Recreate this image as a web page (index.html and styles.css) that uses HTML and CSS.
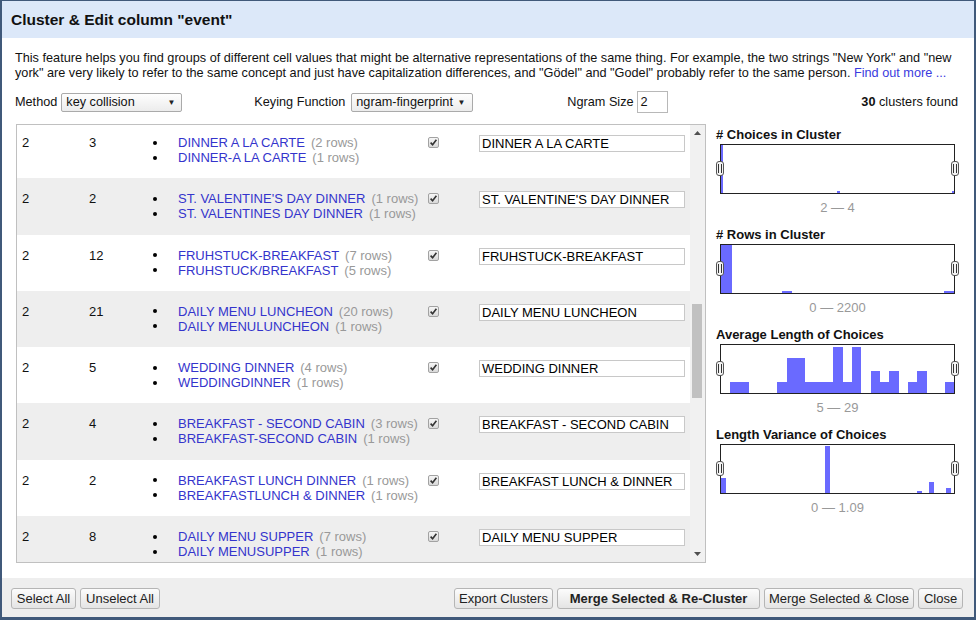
FILE: index.html
```html
<!DOCTYPE html>
<html>
<head>
<meta charset="utf-8">
<title>Cluster &amp; Edit</title>
<link rel="stylesheet" href="styles.css">
</head>
<body>
<div class="dialog">
  <div class="title">Cluster &amp; Edit column "event"</div>
  <div class="body">
    <p class="desc">This feature helps you find groups of different cell values that might be alternative representations of the same thing. For example, the two strings "New York" and "new york" are very likely to refer to the same concept and just have capitalization differences, and "Gödel" and "Godel" probably refer to the same person. <a href="#">Find out more ...</a></p>
    <div class="controls">
      <span>Method</span>
      <div class="select sel-method"><span>key collision</span><span class="arrow">▼</span></div>
      <span class="lbl-key">Keying Function</span>
      <div class="select sel-key"><span>ngram-fingerprint</span><span class="arrow">▼</span></div>
      <span class="lbl-ngram">Ngram Size</span>
      <div class="ngram">2</div>
      <span class="count"><b>30</b> clusters found</span>
    </div>
    <div class="main">
      <div class="table-box">
        <div class="rows-view">
          <div class="rows">
            <div class="row">
              <div class="c">2</div><div class="c">3</div>
              <ul class="vals"><li><span class="dot"></span><a>DINNER A LA CARTE</a><span class="n">(2 rows)</span></li><li><span class="dot"></span><a>DINNER-A LA CARTE</a><span class="n">(1 rows)</span></li></ul>
              <div class="c"><span class="cb"><svg width="9" height="9" viewBox="0 0 9 9"><path d="M1.6 4.6 L3.6 6.8 L7.4 1.8" fill="none" stroke="#333" stroke-width="1.6"/></svg></span></div>
              <div class="c"><div class="inp">DINNER A LA CARTE</div></div>
            </div>
            <div class="row alt">
              <div class="c">2</div><div class="c">2</div>
              <ul class="vals"><li><span class="dot"></span><a>ST. VALENTINE'S DAY DINNER</a><span class="n">(1 rows)</span></li><li><span class="dot"></span><a>ST. VALENTINES DAY DINNER</a><span class="n">(1 rows)</span></li></ul>
              <div class="c"><span class="cb"><svg width="9" height="9" viewBox="0 0 9 9"><path d="M1.6 4.6 L3.6 6.8 L7.4 1.8" fill="none" stroke="#333" stroke-width="1.6"/></svg></span></div>
              <div class="c"><div class="inp">ST. VALENTINE'S DAY DINNER</div></div>
            </div>
            <div class="row">
              <div class="c">2</div><div class="c">12</div>
              <ul class="vals"><li><span class="dot"></span><a>FRUHSTUCK-BREAKFAST</a><span class="n">(7 rows)</span></li><li><span class="dot"></span><a>FRUHSTUCK/BREAKFAST</a><span class="n">(5 rows)</span></li></ul>
              <div class="c"><span class="cb"><svg width="9" height="9" viewBox="0 0 9 9"><path d="M1.6 4.6 L3.6 6.8 L7.4 1.8" fill="none" stroke="#333" stroke-width="1.6"/></svg></span></div>
              <div class="c"><div class="inp">FRUHSTUCK-BREAKFAST</div></div>
            </div>
            <div class="row alt">
              <div class="c">2</div><div class="c">21</div>
              <ul class="vals"><li><span class="dot"></span><a>DAILY MENU LUNCHEON</a><span class="n">(20 rows)</span></li><li><span class="dot"></span><a>DAILY MENULUNCHEON</a><span class="n">(1 rows)</span></li></ul>
              <div class="c"><span class="cb"><svg width="9" height="9" viewBox="0 0 9 9"><path d="M1.6 4.6 L3.6 6.8 L7.4 1.8" fill="none" stroke="#333" stroke-width="1.6"/></svg></span></div>
              <div class="c"><div class="inp">DAILY MENU LUNCHEON</div></div>
            </div>
            <div class="row">
              <div class="c">2</div><div class="c">5</div>
              <ul class="vals"><li><span class="dot"></span><a>WEDDING DINNER</a><span class="n">(4 rows)</span></li><li><span class="dot"></span><a>WEDDINGDINNER</a><span class="n">(1 rows)</span></li></ul>
              <div class="c"><span class="cb"><svg width="9" height="9" viewBox="0 0 9 9"><path d="M1.6 4.6 L3.6 6.8 L7.4 1.8" fill="none" stroke="#333" stroke-width="1.6"/></svg></span></div>
              <div class="c"><div class="inp">WEDDING DINNER</div></div>
            </div>
            <div class="row alt">
              <div class="c">2</div><div class="c">4</div>
              <ul class="vals"><li><span class="dot"></span><a>BREAKFAST - SECOND CABIN</a><span class="n">(3 rows)</span></li><li><span class="dot"></span><a>BREAKFAST-SECOND CABIN</a><span class="n">(1 rows)</span></li></ul>
              <div class="c"><span class="cb"><svg width="9" height="9" viewBox="0 0 9 9"><path d="M1.6 4.6 L3.6 6.8 L7.4 1.8" fill="none" stroke="#333" stroke-width="1.6"/></svg></span></div>
              <div class="c"><div class="inp">BREAKFAST - SECOND CABIN</div></div>
            </div>
            <div class="row">
              <div class="c">2</div><div class="c">2</div>
              <ul class="vals"><li><span class="dot"></span><a>BREAKFAST LUNCH DINNER</a><span class="n">(1 rows)</span></li><li><span class="dot"></span><a>BREAKFASTLUNCH &amp; DINNER</a><span class="n">(1 rows)</span></li></ul>
              <div class="c"><span class="cb"><svg width="9" height="9" viewBox="0 0 9 9"><path d="M1.6 4.6 L3.6 6.8 L7.4 1.8" fill="none" stroke="#333" stroke-width="1.6"/></svg></span></div>
              <div class="c"><div class="inp">BREAKFAST LUNCH &amp; DINNER</div></div>
            </div>
            <div class="row alt">
              <div class="c">2</div><div class="c">8</div>
              <ul class="vals"><li><span class="dot"></span><a>DAILY MENU SUPPER</a><span class="n">(7 rows)</span></li><li><span class="dot"></span><a>DAILY MENUSUPPER</a><span class="n">(1 rows)</span></li></ul>
              <div class="c"><span class="cb"><svg width="9" height="9" viewBox="0 0 9 9"><path d="M1.6 4.6 L3.6 6.8 L7.4 1.8" fill="none" stroke="#333" stroke-width="1.6"/></svg></span></div>
              <div class="c"><div class="inp">DAILY MENU SUPPER</div></div>
            </div>
          </div>
        </div>
        <div class="scrollbar">
          <div class="sb-btn"><svg width="7" height="4" viewBox="0 0 7 4"><path d="M0 4 L3.5 0 L7 4 Z" fill="#505050"/></svg></div>
          <div class="sb-track"><div class="sb-thumb"></div></div>
          <div class="sb-btn"><svg width="7" height="4" viewBox="0 0 7 4"><path d="M0 0 L3.5 4 L7 0 Z" fill="#505050"/></svg></div>
        </div>
      </div>
      <div class="facets">
        <div class="facet">
          <h3># Choices in Cluster</h3>
          <div class="hist">
            <svg width="233" height="48" viewBox="0 0 233 48"><g fill="#6a6aff">
              <rect x="0" y="0" width="2" height="48"/>
              <rect x="116" y="46" width="3" height="2"/>
              <rect x="231" y="46" width="2" height="2"/>
            </g></svg>
            <span class="handle l"><i></i></span><span class="handle r"><i></i></span>
          </div>
          <div class="range">2 — 4</div>
        </div>
        <div class="facet">
          <h3># Rows in Cluster</h3>
          <div class="hist">
            <svg width="233" height="48" viewBox="0 0 233 48"><g fill="#6a6aff">
              <rect x="0" y="0" width="11" height="48"/>
              <rect x="61" y="46" width="10" height="2"/>
              <rect x="223" y="46" width="10" height="2"/>
            </g></svg>
            <span class="handle l"><i></i></span><span class="handle r"><i></i></span>
          </div>
          <div class="range">0 — 2200</div>
        </div>
        <div class="facet">
          <h3>Average Length of Choices</h3>
          <div class="hist">
            <svg width="233" height="48" viewBox="0 0 233 48"><g fill="#6a6aff">
              <rect x="9" y="37" width="19" height="11"/>
              <rect x="56" y="37" width="10" height="11"/>
              <rect x="66" y="13" width="18" height="35"/>
              <rect x="84" y="37" width="28" height="11"/>
              <rect x="112" y="2" width="10" height="46"/>
              <rect x="122" y="37" width="9" height="11"/>
              <rect x="131" y="2" width="9" height="46"/>
              <rect x="150" y="26" width="9" height="22"/>
              <rect x="159" y="37" width="9" height="11"/>
              <rect x="168" y="26" width="10" height="22"/>
              <rect x="187" y="37" width="9" height="11"/>
              <rect x="196" y="26" width="10" height="22"/>
              <rect x="224" y="37" width="9" height="11"/>
            </g></svg>
            <span class="handle l"><i></i></span><span class="handle r"><i></i></span>
          </div>
          <div class="range">5 — 29</div>
        </div>
        <div class="facet">
          <h3>Length Variance of Choices</h3>
          <div class="hist">
            <svg width="233" height="48" viewBox="0 0 233 48"><g fill="#6a6aff">
              <rect x="0" y="33" width="5" height="15"/>
              <rect x="104" y="1" width="5" height="47"/>
              <rect x="196" y="46" width="5" height="2"/>
              <rect x="208" y="37" width="5" height="11"/>
              <rect x="225" y="43" width="5" height="5"/>
            </g></svg>
            <span class="handle l"><i></i></span><span class="handle r"><i></i></span>
          </div>
          <div class="range">0 — 1.09</div>
        </div>
      </div>
    </div>
  </div>
  <div class="footer">
    <button class="btn w-sel">Select All</button>
    <button class="btn w-unsel">Unselect All</button>
    <button class="btn push w-export">Export Clusters</button>
    <button class="btn strong w-recluster">Merge Selected &amp; Re-Cluster</button>
    <button class="btn w-mclose">Merge Selected &amp; Close</button>
    <button class="btn w-close">Close</button>
  </div>
</div>
</body>
</html>
```

FILE: styles.css
```css
* { box-sizing: border-box; }
html, body { margin: 0; padding: 0; }
body {
  width: 976px;
  height: 620px;
  overflow: hidden;
  background: #40597a;
  padding: 1px 2px 0 2px;
  font-family: "Liberation Sans", Arial, sans-serif;
  font-size: 13px;
  color: #111;
}
.dialog {
  width: 972px;
  height: 616px;
  background: #fff;
  display: flex;
  flex-direction: column;
}
.title {
  height: 37px;
  flex: none;
  background: #dce8f9;
  font-weight: bold;
  font-size: 15.5px;
  padding-left: 9px;
  display: flex;
  align-items: center;
  color: #111;
}
.body {
  flex: 1;
  padding: 13px 16px 0 13px;
}
.desc {
  margin: 0;
  line-height: 15px;
  font-size: 12.7px;
}
.desc a { color: #3a3ade; text-decoration: none; }

.controls {
  margin-top: 10px;
  height: 22px;
  display: flex;
  align-items: center;
  font-size: 12.7px;
}
.select {
  height: 19px;
  border: 1px solid #aaa;
  border-radius: 2px;
  background: linear-gradient(#fefefe, #ececec);
  display: flex;
  align-items: center;
  justify-content: space-between;
  padding-left: 4px;
}
.select .arrow { font-size: 8px; color: #222; }
.sel-method { width: 121px; margin-left: 4px; }
.sel-method .arrow { margin-right: 6px; }
.sel-key { width: 122px; margin-left: 6px; }
.sel-key .arrow { margin-right: 7px; }
.lbl-key { margin-left: 72px; }
.lbl-ngram { margin-left: 94px; }
.ngram {
  width: 31px;
  height: 22px;
  margin-left: 3px;
  border: 1px solid #b8b8b8;
  padding-left: 3px;
  display: flex;
  align-items: center;
  background: #fff;
}
.count { margin-left: auto; }

.main {
  margin-top: 11px;
  display: flex;
}
.table-box {
  width: 690px;
  height: 439px;
  margin-left: 1px;
  border: 1px solid #c0c0c0;
  display: flex;
}
.rows-view {
  flex: 1;
  overflow: hidden;
}
.rows { margin-top: -3px; }
.row {
  height: 56.3px;
  padding-top: 13px;
  display: grid;
  grid-template-columns: 67px 66px 273px 51px 216px;
  line-height: 15px;
  background: #fff;
}
.row.alt { background: #eee; }
.c { padding-left: 5px; }
.vals {
  list-style: none;
  margin: 0;
  padding: 0;
}
.vals li {
  display: flex;
  align-items: center;
}
.dot {
  width: 4px;
  height: 4px;
  border-radius: 50%;
  background: #000;
  margin-left: 3px;
  margin-right: 21px;
}
.vals a { color: #3434cc; }
.vals .n { color: #999; margin-left: 6px; }
.cb {
  display: flex;
  align-items: center;
  justify-content: center;
  width: 11px;
  height: 11px;
  margin-top: 2px;
  border: 1px solid #a2a2a2;
  border-radius: 2px;
  background: linear-gradient(#f6f6f6, #d9d9d9);
}
.cb svg { display: block; }
.inp {
  width: 206px;
  height: 17px;
  border: 1px solid #c8c8c8;
  background: #fff;
  padding-left: 2px;
  line-height: 15px;
  color: #000;
  white-space: nowrap;
  overflow: hidden;
}

.scrollbar {
  width: 15px;
  background: #f1f1f1;
  display: flex;
  flex-direction: column;
}
.sb-btn {
  height: 16px;
  display: flex;
  align-items: center;
  justify-content: center;
  flex: none;
}
.sb-track { flex: 1; }
.sb-thumb {
  margin: 163px 0 0 2px;
  width: 10px;
  height: 94px;
  background: #c1c1c1;
}

.facets {
  width: 242px;
  margin-left: 10px;
  padding-top: 3px;
}
.facet { margin-bottom: 12px; }
.facet h3 {
  margin: 0;
  font-size: 13px;
  line-height: 15px;
  font-weight: bold;
  color: #111;
}
.hist {
  position: relative;
  margin: 2px 0 0 4px;
  width: 235px;
  height: 50px;
  border: 1px solid #222;
  background: #fff;
}
.hist svg { display: block; }
.handle {
  position: absolute;
  top: 50%;
  margin-top: -8px;
  width: 8px;
  height: 15px;
  border: 1px solid #555;
  border-radius: 3px;
  background: #f4f4f4;
  display: flex;
  align-items: center;
  justify-content: center;
}
.handle i {
  display: block;
  width: 4px;
  height: 9px;
  border-left: 1px solid #333;
  border-right: 1px solid #333;
}
.handle.l { left: -5px; }
.handle.r { right: -5px; }
.range {
  margin: 6px 0 0 4px;
  width: 235px;
  text-align: center;
  color: #999;
  line-height: 15px;
}

.footer {
  height: 39px;
  flex: none;
  background: #eee;
  padding: 10px 11px 0 9px;
  display: flex;
  align-items: flex-start;
  gap: 4px;
}
.btn {
  height: 21px;
  padding: 0;
  border: 1px solid #b5b5b5;
  border-radius: 3px;
  background: linear-gradient(#fcfcfc, #e4e4e4);
  font-family: "Liberation Sans", Arial, sans-serif;
  font-size: 13px;
  color: #222;
  text-align: center;
}
.btn.push { margin-left: auto; }
.btn.strong { font-weight: bold; }
.w-sel { width: 65px; }
.w-unsel { width: 80px; }
.w-export { width: 99px; }
.w-recluster { width: 203px; }
.w-mclose { width: 150px; }
.w-close { width: 45px; }
```
